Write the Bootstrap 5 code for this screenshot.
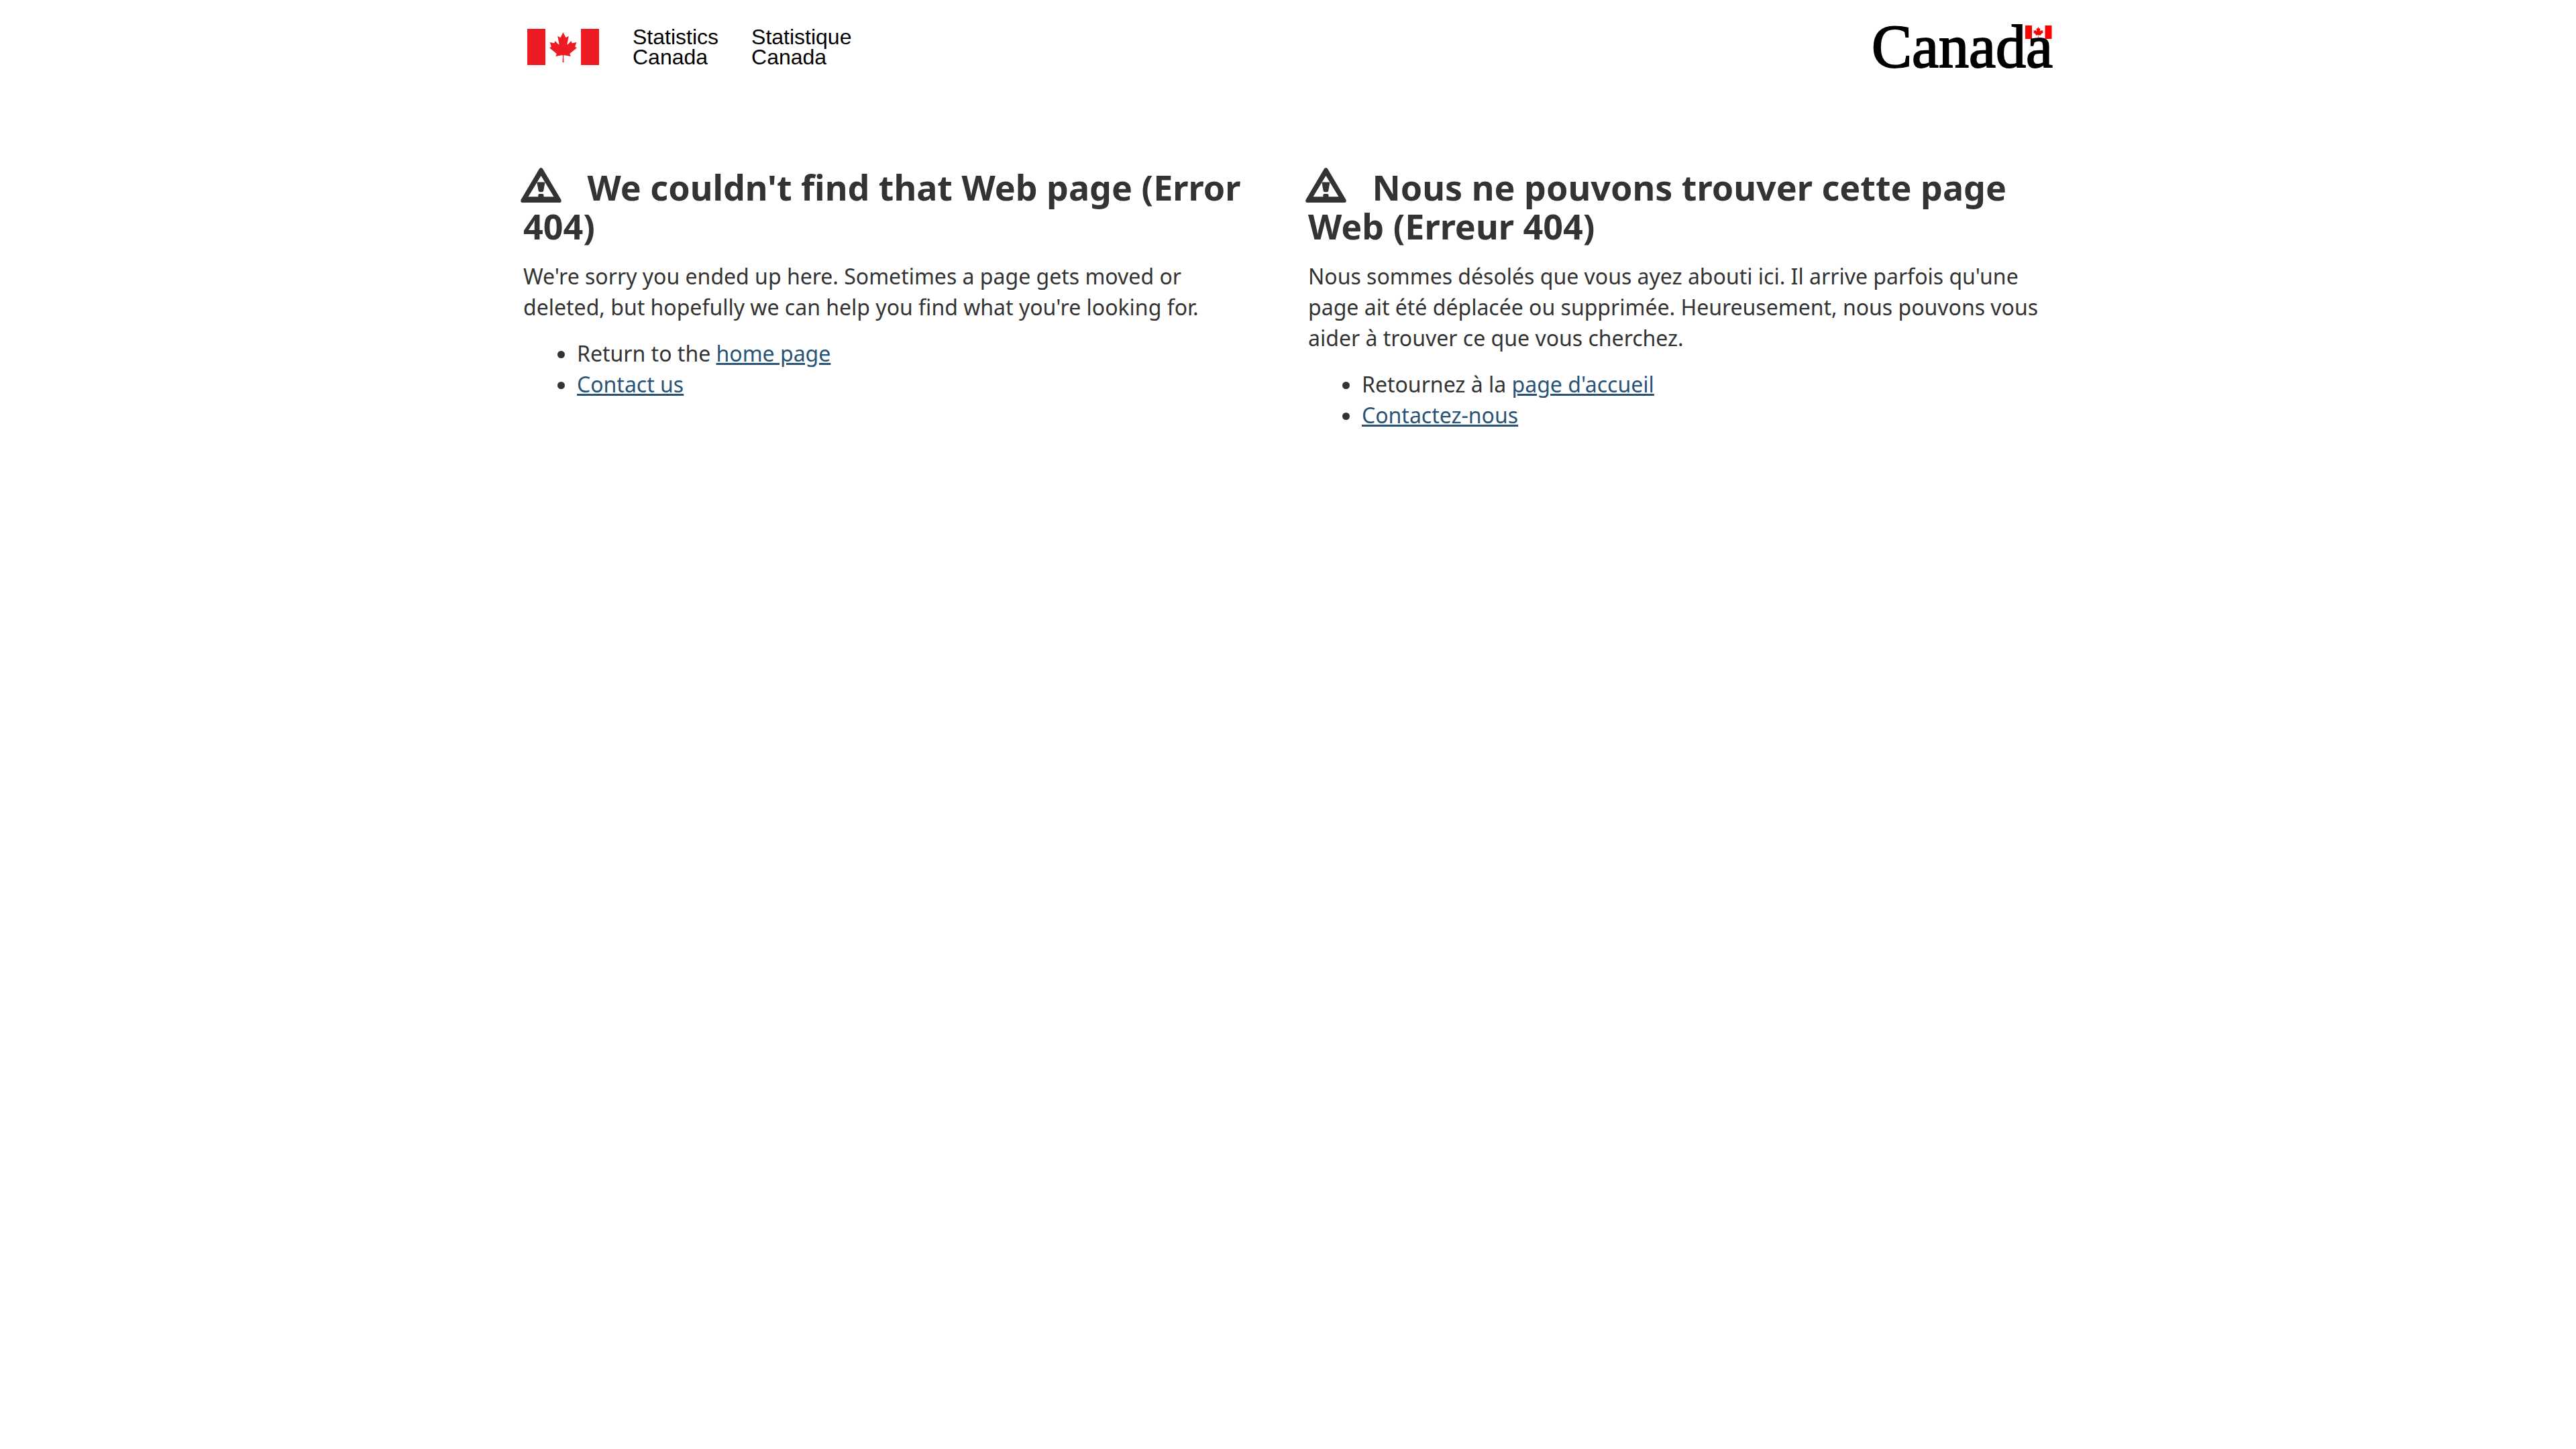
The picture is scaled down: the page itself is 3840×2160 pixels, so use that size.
<!DOCTYPE html>
<html lang="en">
<head>
<meta charset="utf-8">
<meta name="viewport" content="width=device-width, initial-scale=1">
<title>We couldn't find that Web page (Error 404) / Nous ne pouvons trouver cette page Web (Erreur 404)</title>
<link href="https://cdn.jsdelivr.net/npm/bootstrap@5.3.0/dist/css/bootstrap.min.css" rel="stylesheet">
<style>
  body { font-family: "Noto Sans", sans-serif; font-size: 32px; line-height: 46px; color: #333; }
  .page-width { max-width: 2340px; --bs-gutter-x: 60px; }
  .page-width > .row { --bs-gutter-x: 60px; }
  .site-header { padding-top: 20px; margin-bottom: 130px; }
  .signature { gap: 49px; font-family: "Liberation Sans", sans-serif; font-size: 32px; line-height: 30px; color: #000; }
  .wordmark { font-family: "Liberation Serif", serif; font-size: 90px; }
  h1 { font-size: 52px; line-height: 58px; font-weight: 700; margin-bottom: 23px; }
  .warning-sign { width: 61px; height: 52px; margin: 0 25px 0 -4px; vertical-align: -3px; }
  p, .help-links { margin-bottom: 23px; }
  .help-links { padding-left: 80px; }
  .help-links a { color: #295376; }
</style>
<script src="https://cdn.jsdelivr.net/npm/bootstrap@5.3.0/dist/js/bootstrap.bundle.min.js" defer></script>
</head>
<body>
<svg class="d-none" aria-hidden="true">
  <symbol id="leaf" viewBox="2940 370 3720 4060" preserveAspectRatio="none">
    <path d="m4890 4430-45-863a95 95 0 0 1 111-98l859 151-116-320a65 65 0 0 1 20-73l941-762-212-99a65 65 0 0 1-34-79l186-572-542 115a65 65 0 0 1-73-38l-105-247-423 454a65 65 0 0 1-111-57l204-1052-327 189a65 65 0 0 1-91-27l-332-652-332 652a65 65 0 0 1-91 27l-327-189 204 1052a65 65 0 0 1-111 57l-423-454-105 247a65 65 0 0 1-73 38l-542-115 186 572a65 65 0 0 1-34 79l-212 99 941 762a65 65 0 0 1 20 73l-116 320 859-151a95 95 0 0 1 111 98l-45 863z"/>
  </symbol>
  <symbol id="warning" viewBox="0 0 61 52">
    <path fill-rule="evenodd" d="M28 1.500Q30.500-1.500 33 1.500L60.300 47.500Q62 52 57.500 52H3.500Q-1 52 .700 47.500ZM30.500 12 11.500 43.200H26.300V41Q26.300 39 28.300 39H32.700Q34.500 39 34.500 41V43.200H49.500Z"/>
    <path d="M25.500 21.500H35.500Q36.500 21.500 36.300 22.700L34.200 34.500Q34 36.200 32 36.200H29Q27 36.200 26.700 34.500L24.500 22.700Q24.300 21.500 25.500 21.500Z"/>
  </symbol>
</svg>

<header class="site-header">
  <div class="container-fluid page-width d-flex flex-wrap justify-content-between align-items-center">
    <div class="signature d-flex align-items-center ps-1">
      <svg width="110" height="54" viewBox="0 0 110 54" fill="#ed1c24" role="img" aria-label="Flag of Canada">
        <path d="M2 0H29V54H2ZM82 0H109V54H82Z"/>
        <use href="#leaf" x="35" y="5" width="41" height="45"/>
      </svg>
      <span>Statistics<br>Canada</span>
      <span lang="fr">Statistique<br>Canada</span>
    </div>
    <svg width="272" height="100" viewBox="0 0 272 100" role="img" aria-label="Symbol of the Government of Canada">
      <text class="wordmark" x="2" y="80" stroke="#000" stroke-width="2">Canada</text>
      <g fill="#f00">
        <path d="M231 18H241V38H231ZM260.500 18H270.500V38H260.500Z"/>
        <use href="#leaf" x="243" y="20" width="15" height="16"/>
      </g>
    </svg>
  </div>
</header>

<main class="container-fluid page-width">
  <div class="row">
    <section class="col-md-6">
      <h1><svg class="warning-sign" fill="#333" aria-hidden="true"><use href="#warning"/></svg> We couldn't find that Web page (Error 404)</h1>
      <p>We're sorry you ended up here. Sometimes a page gets moved or deleted, but hopefully we can help you find what you're looking for.</p>
      <ul class="help-links">
        <li>Return to the <a href="#home">home page</a></li>
        <li><a href="#contact">Contact us</a></li>
      </ul>
    </section>
    <section class="col-md-6" lang="fr">
      <h1><svg class="warning-sign" fill="#333" aria-hidden="true"><use href="#warning"/></svg> Nous ne pouvons trouver cette page Web (Erreur 404)</h1>
      <p>Nous sommes désolés que vous ayez abouti ici. Il arrive parfois qu'une page ait été déplacée ou supprimée. Heureusement, nous pouvons vous aider à trouver ce que vous cherchez.</p>
      <ul class="help-links">
        <li>Retournez à la <a href="#accueil">page d'accueil</a></li>
        <li><a href="#contactez">Contactez-nous</a></li>
      </ul>
    </section>
  </div>
</main>
</body>
</html>
